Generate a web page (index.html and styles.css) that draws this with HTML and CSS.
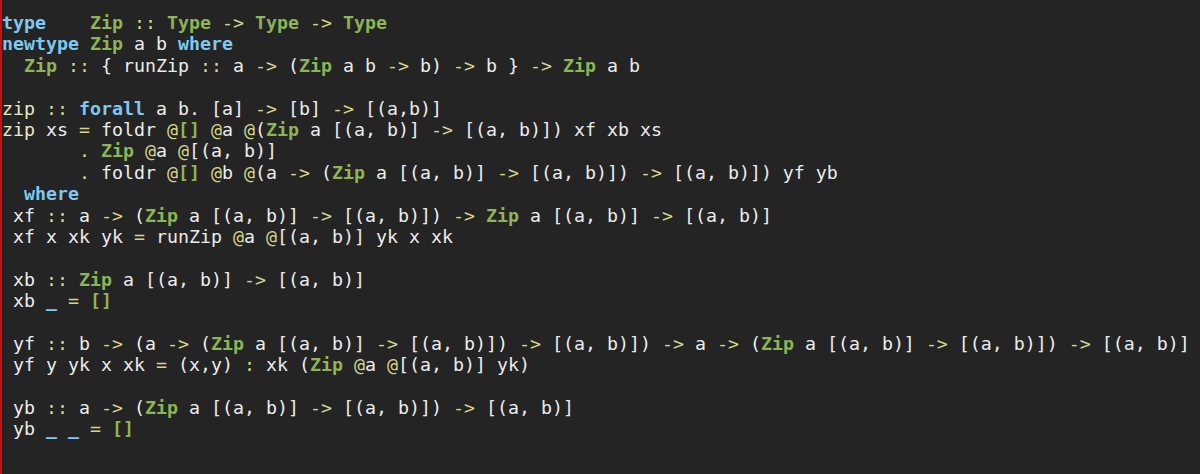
FILE: index.html
```html
<!DOCTYPE html>
<html>
<head>
<meta charset="utf-8">
<link rel="stylesheet" href="styles.css">
</head>
<body>
<div class="term">
<div class="code">
<div class="ln"><span class="k">type</span>    <span class="t">Zip</span> <span class="o">::</span> <span class="t">Type</span> <span class="o">-&gt;</span> <span class="t">Type</span> <span class="o">-&gt;</span> <span class="t">Type</span></div>
<div class="ln"><span class="k">newtype</span> <span class="t">Zip</span> a b <span class="k">where</span></div>
<div class="ln">  <span class="t">Zip</span> <span class="o">::</span> { runZip <span class="o">::</span> a <span class="o">-&gt;</span> (<span class="t">Zip</span> a b <span class="o">-&gt;</span> b) <span class="o">-&gt;</span> b } <span class="o">-&gt;</span> <span class="t">Zip</span> a b</div>
<div class="ln blank"></div>
<div class="ln"><span class="f">zip</span> <span class="o">::</span> <span class="k">forall</span> a b. [a] <span class="o">-&gt;</span> [b] <span class="o">-&gt;</span> [(a,b)]</div>
<div class="ln"><span class="f">zip</span> xs <span class="o">=</span> foldr <span class="o">@</span><span class="t">[]</span> <span class="o">@</span>a <span class="o">@</span>(<span class="t">Zip</span> a [(a, b)] <span class="o">-&gt;</span> [(a, b)]) xf xb xs</div>
<div class="ln">       <span class="o">.</span> <span class="t">Zip</span> <span class="o">@</span>a <span class="o">@</span>[(a, b)]</div>
<div class="ln">       <span class="o">.</span> foldr <span class="o">@</span><span class="t">[]</span> <span class="o">@</span>b <span class="o">@</span>(a <span class="o">-&gt;</span> (<span class="t">Zip</span> a [(a, b)] <span class="o">-&gt;</span> [(a, b)]) <span class="o">-&gt;</span> [(a, b)]) yf yb</div>
<div class="ln">  <span class="k">where</span></div>
<div class="ln"> xf <span class="o">::</span> a <span class="o">-&gt;</span> (<span class="t">Zip</span> a [(a, b)] <span class="o">-&gt;</span> [(a, b)]) <span class="o">-&gt;</span> <span class="t">Zip</span> a [(a, b)] <span class="o">-&gt;</span> [(a, b)]</div>
<div class="ln"> xf x xk yk <span class="o">=</span> runZip <span class="o">@</span>a <span class="o">@</span>[(a, b)] yk x xk</div>
<div class="ln blank"></div>
<div class="ln"> xb <span class="o">::</span> <span class="t">Zip</span> a [(a, b)] <span class="o">-&gt;</span> [(a, b)]</div>
<div class="ln"> xb <span class="k">_</span> <span class="o">=</span> <span class="t">[]</span></div>
<div class="ln blank"></div>
<div class="ln"> yf <span class="o">::</span> b <span class="o">-&gt;</span> (a <span class="o">-&gt;</span> (<span class="t">Zip</span> a [(a, b)] <span class="o">-&gt;</span> [(a, b)]) <span class="o">-&gt;</span> [(a, b)]) <span class="o">-&gt;</span> a <span class="o">-&gt;</span> (<span class="t">Zip</span> a [(a, b)] <span class="o">-&gt;</span> [(a, b)]) <span class="o">-&gt;</span> [(a, b)]</div>
<div class="ln"> yf y yk x xk <span class="o">=</span> (x,y) <span class="o">:</span> xk (<span class="t">Zip</span> <span class="o">@</span>a <span class="o">@</span>[(a, b)] yk)</div>
<div class="ln blank"></div>
<div class="ln"> yb <span class="o">::</span> a <span class="o">-&gt;</span> (<span class="t">Zip</span> a [(a, b)] <span class="o">-&gt;</span> [(a, b)]) <span class="o">-&gt;</span> [(a, b)]</div>
<div class="ln"> yb <span class="k">_</span> <span class="k">_</span> <span class="o">=</span> <span class="t">[]</span></div>
</div>
</div>
</body>
</html>
```

FILE: styles.css
```css
html, body {
  margin: 0;
  padding: 0;
  background: #242424;
}

.term {
  box-sizing: border-box;
  width: 1200px;
  height: 474px;
  background: #242424;
  border-left: 2px solid #cc1010;
  padding-top: 12px;
  overflow: hidden;
}

.code {
  display: flex;
  flex-direction: column;
  font-family: "DejaVu Sans Mono", "Liberation Mono", monospace;
  font-size: 18.271px;
  line-height: 21.4px;
  color: #ececec;
}

.ln {
  height: 21.4px;
  white-space: pre;
}

.k {
  color: #7fc8f2;
  font-weight: bold;
}

.t {
  color: #8cb556;
  font-weight: bold;
}

.o {
  color: #d6d68a;
}

.f {
  color: #ece8c4;
}
```
